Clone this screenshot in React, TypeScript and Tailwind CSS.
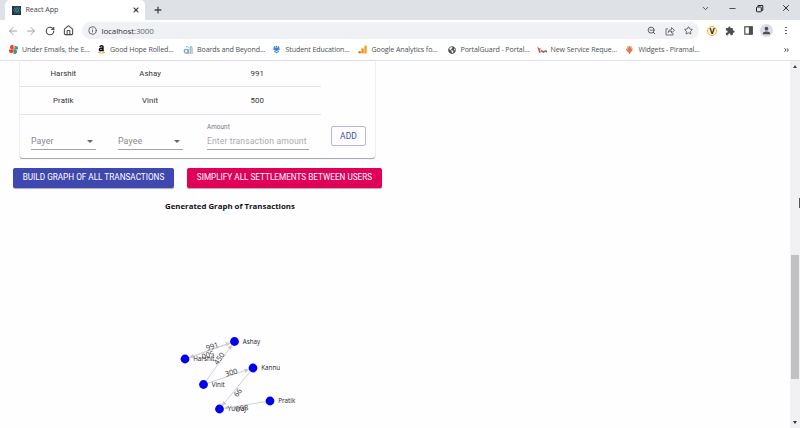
import React from "react";
import { ArrowLeft, ArrowRight, RotateCw, House, Info, ZoomOut, Star, ChevronDown, X, Plus, Minus } from "lucide-react";
import { MdExtension, MdPerson } from "react-icons/md";
import { FaAmazon, FaReact, FaGlobeAmericas } from "react-icons/fa";

const ui = "font-['Open_Sans','Noto_Sans',sans-serif]";
const body = "font-[Roboto,'Liberation_Sans',sans-serif]";

function Pinwheel() {
  return (
    <svg viewBox="0 0 10 10" className="size-[9px]">
      <path d="M5 5H2.500A2.500 2.500 0 0 1 5 .3Z" fill="#ea4335" />
      <path d="M5 5V2.500A2.500 2.500 0 0 1 9.700 5Z" fill="#4285f4" />
      <path d="M5 5H7.500A2.500 2.500 0 0 1 5 9.700Z" fill="#34a853" />
      <path d="M5 5V7.500A2.500 2.500 0 0 1 .3 5Z" fill="#ea4335" />
      <path d="M5 .3Q7 1.500 7 3L5 5Z" fill="#fbbc04" />
    </svg>
  );
}
function AmazonMark() {
  return (
    <svg viewBox="0 0 10 10" className="size-[9px]" fill="none">
      <path d="M3 2.300Q5-.1 6.600 1.600V6.300L7.300 7M6.600 3.600Q2.600 3.200 2.700 5.400 3.200 7.700 6.600 5" stroke="#111" strokeWidth="1.700" />
      <path d="M1 8Q5 10.500 9 8" stroke="#f5a623" strokeWidth="1.100" />
    </svg>
  );
}
function Boards() {
  return (
    <svg viewBox="0 0 10 10" className="size-[10px]" fill="none" stroke="#7ba6bd">
      <circle cx="3.200" cy="6.300" r="1.900" strokeWidth="1.300" />
      <path d="M5.300 9V4M7.200 9V2Q8.500 .5 9 3V9M3 1.800Q4.500 1 5.500 2.500" />
    </svg>
  );
}
function Student() {
  return (
    <svg viewBox="0 0 10 10" className="size-[9px]" fill="#427fdd">
      <path d="M5 2.500 9.500 4.500 5 7 .5 4.500Z" />
      <path d="M2.300 6.300 5 7.800 7.700 6.300V7.500L5 9.300 2.300 7.500Z" />
      <circle cx="2.800" cy="2.500" r="1" /><circle cx="7.200" cy="2.500" r="1" /><circle cx="5" cy="1.600" r=".9" />
    </svg>
  );
}
function Analytics() {
  return (
    <svg viewBox="0 0 10 10" className="size-[9px]">
      <rect x="7" y=".5" width="2.700" height="9" rx="1" fill="#f2a51c" />
      <rect x="3.800" y="3.500" width="2.600" height="6" rx="1" fill="#e09320" />
      <circle cx="1.900" cy="8.100" r="1.400" fill="#e37400" />
    </svg>
  );
}
function Service() {
  return (
    <svg viewBox="0 0 10 10" className="size-[10px]" fill="none">
      <path d="M.5 2.500Q2 3 2 5.500L3 7.800M2.300 5.500 3.300 3.300" stroke="#e14a3b" strokeWidth="1.200" />
      <path d="M4 7.200V5.800H5.300V7.200M6 5.800V7.200H7.200V5.800M8 7.200V5.800H9.600V7.200" stroke="#554347" strokeWidth=".9" />
    </svg>
  );
}
function Piramal() {
  return (
    <svg viewBox="0 0 10 10" className="size-[9px]" fill="none" strokeLinecap="round">
      <path d="M5 9.500V1.500M5 8.500Q2 7 1.800 4.500M5 8.500Q7.500 7 8 4.500M5 5.500Q3 4 3.300 2M5 5.500Q7 4 6.700 2" stroke="#dd7a48" strokeWidth="1.300" />
      <path d="M3.200 4.500 3.700 6.500M6.800 4.500 6.300 6.500" stroke="#c74f45" />
    </svg>
  );
}

const bookmarks = [
  { label: "Under Emails, the E...", icon: <Pinwheel />, w: "w-[88px]" },
  { label: "Good Hope Rolled...", icon: <AmazonMark />, w: "w-[87px]" },
  { label: "Boards and Beyond...", icon: <Boards />, w: "w-[88.5px]" },
  { label: "Student Education...", icon: <Student />, w: "w-[86px]" },
  { label: "Google Analytics fo...", icon: <Analytics />, w: "w-[89px]" },
  { label: "PortalGuard - Portal...", icon: <FaGlobeAmericas className="size-[8px] text-[#4d5156]" />, w: "w-[90px]" },
  { label: "New Service Reque...", icon: <Service />, w: "w-[88px]" },
  { label: "Widgets - Piramal...", icon: <Piramal />, w: "w-[90px]" },
];

function TabStrip() {
  return (
    <div className="flex h-5 bg-[#dee1e6] text-[#45484d]">
      <div className="ml-[5px] flex w-[140px] items-center rounded-t-[5px] bg-white pl-[7px]">
        <div className="flex size-[9px] items-center justify-center bg-[#20303c]">
          <FaReact className="size-[8px] text-[#53a9c0]" />
        </div>
        <span className="ml-[4.5px] text-[7.2px] leading-none tracking-[-0.1px]">React App</span>
        <X className="ml-auto mr-[5px] size-[8px]" strokeWidth={3.2} />
      </div>
      <Plus className="ml-[8px] mt-[5px] size-[10px]" strokeWidth={3.2} />
      <ChevronDown className="ml-auto mt-[4px] size-[9px]" strokeWidth={2.5} />
      <Minus className="ml-[18px] mt-[4px] size-[9px]" strokeWidth={2.5} />
      <svg viewBox="0 0 9 9" className="ml-[18px] mt-[4px] size-[9px]" fill="none" stroke="#222" strokeWidth="1">
        <rect x="1.500" y="3" width="4.800" height="4.800" rx=".7" />
        <path d="M3 3V1.500H7.800V6.300H6.300" />
      </svg>
      <X className="ml-[17px] mr-[9px] mt-[3px] size-[10px] text-[#222]" strokeWidth={2.2} />
    </div>
  );
}

function Toolbar() {
  return (
    <div className="flex h-[21px] items-center bg-white text-[#4b4e53]">
      <ArrowLeft className="ml-[7px] size-[12px] text-[#a0a2a5]" strokeWidth={2} />
      <ArrowRight className="ml-[6px] size-[12px] text-[#a0a2a5]" strokeWidth={2} />
      <RotateCw className="ml-[8px] size-[10px]" strokeWidth={2.8} />
      <House className="ml-[8px] size-[11px]" strokeWidth={2.4} />
      <div className="ml-[8px] flex h-[17px] w-[617px] items-center rounded-full bg-[#f0f1f4] pl-[6px] pr-[6px]">
        <Info className="size-[9px]" strokeWidth={2.2} />
        <span className="ml-[4.5px] text-[8px] leading-none tracking-[-0.12px] text-[#303338]">localhost<span className="text-[#65696e]">:3000</span></span>
        <ZoomOut className="ml-auto size-[9px]" strokeWidth={2.4} />
        <svg viewBox="0 0 10 10" className="ml-[9px] size-[10px]" fill="none" stroke="#5f6368" strokeWidth=".9">
          <path d="M3 2.800H1V9H8V7M3 6.500Q3.300 3.500 6.500 3.500V1.500L9.500 4.300 6.500 7V5Q4.200 5 3 6.500Z" />
        </svg>
        <Star className="ml-[9px] size-[9px]" strokeWidth={2.3} />
      </div>
      <div className="ml-[8px] flex size-[10px] items-center justify-center rounded-full border-[1.5px] border-[#f3b72d] bg-[#fff4c8] text-[8px] font-bold leading-none text-[#222]">V</div>
      <MdExtension className="ml-[8px] size-[10px]" />
      <svg viewBox="0 0 9 9" className="ml-[9px] size-[9px]" fill="none" stroke="#4b4e53" strokeWidth="1.200">
        <rect x=".8" y=".8" width="7.400" height="7.400" />
        <path d="M5.500 1H8V8H5.500Z" fill="#4b4e53" />
      </svg>
      <div className="ml-[7px] flex size-[13px] items-center justify-center rounded-full bg-[#dadde4]">
        <MdPerson className="size-[11px]" />
      </div>
      <div className="ml-[12px] flex flex-col gap-[1.5px]">
        <i className="size-[1.5px] rounded-full bg-[#4b4e53]" />
        <i className="size-[1.5px] rounded-full bg-[#4b4e53]" />
        <i className="size-[1.5px] rounded-full bg-[#4b4e53]" />
      </div>
    </div>
  );
}

function Bookmarks() {
  return (
    <div className="flex h-[20px] items-center border-b border-[#e1e2e5] bg-white pb-[2px] pl-[8px] text-[#4e5156]">
      {bookmarks.map((b) => (
        <div key={b.label} className={`flex shrink-0 items-center gap-[4px] ${b.w}`}>
          <div className="flex w-[10px] shrink-0 justify-center">{b.icon}</div>
          <span className="whitespace-nowrap text-[7.1px] leading-none tracking-[-0.11px]">{b.label}</span>
        </div>
      ))}
      <svg viewBox="0 0 5 4" className="ml-auto mr-[11px] h-[4px] w-[5px]" fill="none" stroke="#33363b" strokeWidth=".9"><path d="M.4.3 2.200 2 .4 3.700M2.700.3 4.500 2 2.700 3.700" /></svg>
    </div>
  );
}

function Row({ payer, payee, amount, h }: { payer: string; payee: string; amount: string; h: string }) {
  return (
    <div className={`flex w-[301px] items-center border-b border-[#e4e4e7] text-center text-[7.8px] leading-none tracking-[0.08px] text-[#333] ${h}`}>
      <span className="w-[87px]">{payer}</span>
      <span className="w-[87px]">{payee}</span>
      <span className="w-[128px]">{amount}</span>
    </div>
  );
}

function Select({ label }: { label: string }) {
  return (
    <div className="flex h-[16px] w-[65px] items-center border-b border-[#a5a5a8] pr-[3px] text-[8.8px] text-[#8b8b8e]">
      <span className="leading-none tracking-[0.1px]">{label}</span>
      <svg viewBox="0 0 6 3" className="ml-auto h-[3px] w-[6px]"><path d="M0 0H6L3 3Z" fill="#66666a" /></svg>
    </div>
  );
}

function Graph() {
  const nodes = [
    { x: 234.5, y: 341.5, name: "Ashay" },
    { x: 185, y: 359, name: "Harshit" },
    { x: 253, y: 368, name: "Kannu" },
    { x: 203.5, y: 384.5, name: "Vinit" },
    { x: 219.5, y: 409, name: "Yuvraj" },
    { x: 270, y: 401, name: "Pratik" },
  ];
  const edges = [
    [185, 359, 229.5, 343.2], [234.5, 341.5, 190, 357.2], [203.5, 384.5, 231.5, 345.6],
    [203.5, 384.5, 248.2, 369.6], [253, 368, 222.6, 405.2], [270, 401, 224.6, 408.2],
  ];
  const labels = [
    { x: 213, y: 348.8, r: -18, t: "991" },
    { x: 207, y: 352.5, r: 161, t: "500" },
    { x: 221.3, y: 360, r: -54, t: "450" },
    { x: 232, y: 375, r: -17, t: "300" },
    { x: 239.8, y: 394.3, r: -51, t: "66" },
    { x: 241.6, y: 405.6, r: 172, t: "800" },
  ];
  return (
    <svg viewBox="160 320 160 100" className="ml-[160px] mt-[108px] h-[100px] w-[160px] font-['Open_Sans','Noto_Sans',sans-serif]">
      <defs>
        <marker id="arrow" viewBox="0 0 6 6" refX="5" refY="3" markerWidth="4.500" markerHeight="4.500" orient="auto">
          <path d="M0 0 6 3 0 6Z" fill="#c7c7ca" />
        </marker>
      </defs>
      {edges.map(([a, b, c, d], i) => <line key={i} x1={a} y1={b} x2={c} y2={d} stroke="#d0d0d3" strokeWidth="1" markerEnd="url(#arrow)" />)}
      {nodes.map((n) => (
        <g key={n.name}>
          <circle cx={n.x} cy={n.y} r="4.400" fill="#0000f0" />
          <text x={n.x + 8.2} y={n.y + 2.4} fontSize="6.300" fill="#222">{n.name}</text>
        </g>
      ))}
      {labels.map((l) => <text key={l.t} transform={`translate(${l.x} ${l.y}) rotate(${l.r})`} textAnchor="middle" fontSize="7.400" fill="#333">{l.t}</text>)}
    </svg>
  );
}

export default function App() {
  return (
    <div className={`h-[428px] w-[800px] overflow-hidden bg-[#fefdff] ${ui}`}>
      <TabStrip />
      <Toolbar />
      <Bookmarks />
      <div className="flex h-[367px]">
        <main className={`w-[790px] ${body}`}>
          <section className="ml-[20px] h-[97px] w-[355px] rounded-b-[2px] shadow-[0_1px_1px_#a0a0a3,0_0_1px_#bbb]">
            <Row payer="Harshit" payee="Ashay" amount="991" h="h-[26px]" />
            <Row payer="Pratik" payee="Vinit" amount="500" h="h-[28px]" />
            <div className="flex pl-[11px]">
              <div className="mt-[19px]"><Select label="Payer" /></div>
              <div className="ml-[22px] mt-[19px]"><Select label="Payee" /></div>
              <div className="ml-[24px] mt-[9px] w-[102px]">
                <div className="text-[6.3px] leading-[7px] tracking-[0.1px] text-[#77777a]">Amount</div>
                <div className="flex h-[19px] items-center border-b border-[#a5a5a8] pt-[3px]">
                  <span className="whitespace-nowrap text-[8.6px] leading-[11px] tracking-[0.12px] text-[#acacaf]">Enter transaction amount</span>
                </div>
              </div>
              <button className="ml-[22px] mt-[11px] flex h-[20px] w-[35px] items-center justify-center rounded-[2px] border border-[#b4b8dc] text-[8.6px] leading-none text-[#4853a5]">ADD</button>
            </div>
          </section>
          <div className="ml-[13px] mt-[10px] flex gap-[13px] text-[8.2px] leading-none text-white">
            <button className="h-[20px] w-[161px] whitespace-nowrap rounded-[2px] bg-[#3f48ae] pb-[1px] shadow-[0_1px_1px_#aaa]">BUILD GRAPH OF ALL TRANSACTIONS</button>
            <button className="h-[20px] w-[195px] whitespace-nowrap rounded-[2px] bg-[#e00058] pb-[1px] shadow-[0_1px_1px_#aaa]">SIMPLIFY ALL SETTLEMENTS BETWEEN USERS</button>
          </div>
          <h2 className={`ml-[165px] mt-[14px] h-[10px] whitespace-nowrap text-[7.85px] font-bold leading-[8px] text-[#111] ${ui}`}>Generated Graph of Transactions</h2>
          <Graph />
        </main>
        <aside className="flex w-[10px] flex-col items-center bg-[#f1f1f3]">
          <svg viewBox="0 0 4 3" className="mt-[4px] h-[3px] w-[4px]"><path d="M0 3 2 0 4 3Z" fill="#444" /></svg>
          <div className="ml-auto mt-[130px] h-[10px] w-[1.5px] bg-[#555]" />
          <div className="mt-[47px] h-[124px] w-[8px] bg-[#c1c1c1]" />
          <svg viewBox="0 0 4 3" className="mb-[4px] mt-auto h-[3px] w-[4px]"><path d="M0 0H4L2 3Z" fill="#333" /></svg>
        </aside>
      </div>
    </div>
  );
}
